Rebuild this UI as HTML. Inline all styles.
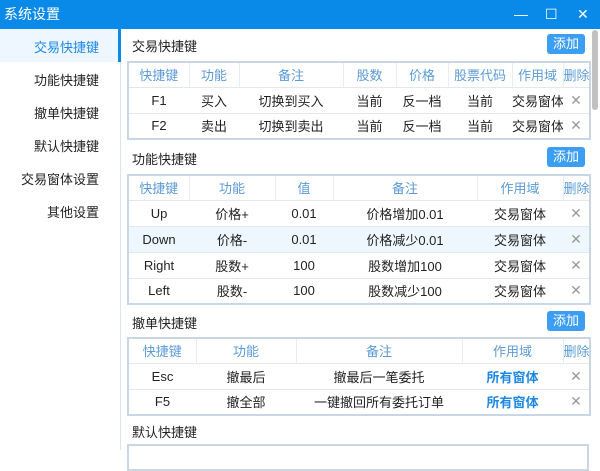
<!DOCTYPE html>
<html><head><meta charset="utf-8"><style>
*{margin:0;padding:0;box-sizing:border-box}
body{width:600px;height:450px;overflow:hidden;background:#fff;font-family:"Liberation Sans","Noto Sans CJK SC",sans-serif;font-size:13px;color:#222;position:relative}
.title{position:absolute;left:0;top:0;width:600px;height:29px;background:#0a8ae8;color:#fff;font-size:14px;line-height:29px;padding-left:4px}
.wb{position:absolute;top:0;height:29px;line-height:29px;color:#fff;font-size:14px}
.side{position:absolute;left:0;top:29px;width:121px;height:421px;border-right:1px solid #dde3ea}
.si{position:absolute;left:0;width:99px;font-size:13px;text-align:right}
.act{position:absolute;left:0;top:29px;width:121px;height:33px;background:#eef6ff;border-right:3px solid #0a8ae8}
.h{position:absolute;left:132px;font-size:13px}
.btn{position:absolute;left:547px;width:38px;height:20px;background:#3c9ef2;color:#fff;border-radius:3px;text-align:center;line-height:20px;font-size:13px}
table{position:absolute;left:127px;width:462px;border-collapse:collapse;border:2px solid #c9d6e6;table-layout:fixed}
td{text-align:center;height:26px;border-bottom:1px solid #e3e8ee;white-space:nowrap;overflow:hidden;font-size:13px}
tr.hd td{color:#5b9bd5;border-right:1px solid #e8edf2;height:25px}
tr.hd td:last-child{border-right:none}
.x{color:#999;font-size:14px}
.bl{color:#1e88e5;font-weight:bold}
.hl td{background:#eef6fe}
.sb{position:absolute;left:592px;top:30px;width:6px;height:80px;background:#c1c1c1;border-radius:3px}
</style></head><body>
<div class="title">系统设置</div>
<div class="wb" style="left:514px">—</div>
<div class="wb" style="left:545px">☐</div>
<div class="wb" style="left:577px">✕</div>
<div class="side"></div>
<div class="act"></div>
<div class="si" style="top:37px;color:#1e88e5">交易快捷键</div>
<div class="si" style="top:70px">功能快捷键</div>
<div class="si" style="top:103px">撤单快捷键</div>
<div class="si" style="top:136px">默认快捷键</div>
<div class="si" style="top:169px">交易窗体设置</div>
<div class="si" style="top:202px">其他设置</div>

<div class="h" style="top:36px">交易快捷键</div>
<div class="btn" style="top:34px">添加</div>
<table style="top:61px">
<colgroup><col style="width:61px"><col style="width:50px"><col style="width:104px"><col style="width:53px"><col style="width:52px"><col style="width:64px"><col style="width:51px"><col style="width:27px"></colgroup>
<tr class="hd"><td>快捷键</td><td>功能</td><td>备注</td><td>股数</td><td>价格</td><td>股票代码</td><td>作用域</td><td>删除</td></tr>
<tr><td>F1</td><td>买入</td><td>切换到买入</td><td>当前</td><td>反一档</td><td>当前</td><td>交易窗体</td><td class="x">✕</td></tr>
<tr><td>F2</td><td>卖出</td><td>切换到卖出</td><td>当前</td><td>反一档</td><td>当前</td><td>交易窗体</td><td class="x">✕</td></tr>
</table>

<div class="h" style="top:149px">功能快捷键</div>
<div class="btn" style="top:147px">添加</div>
<table style="top:174px">
<colgroup><col style="width:61px"><col style="width:86px"><col style="width:58px"><col style="width:144px"><col style="width:86px"><col style="width:27px"></colgroup>
<tr class="hd"><td>快捷键</td><td>功能</td><td>值</td><td>备注</td><td>作用域</td><td>删除</td></tr>
<tr><td>Up</td><td>价格+</td><td>0.01</td><td>价格增加0.01</td><td>交易窗体</td><td class="x">✕</td></tr>
<tr class="hl"><td>Down</td><td>价格-</td><td>0.01</td><td>价格减少0.01</td><td>交易窗体</td><td class="x">✕</td></tr>
<tr><td>Right</td><td>股数+</td><td>100</td><td>股数增加100</td><td>交易窗体</td><td class="x">✕</td></tr>
<tr><td>Left</td><td>股数-</td><td>100</td><td>股数减少100</td><td>交易窗体</td><td class="x">✕</td></tr>
</table>

<div class="h" style="top:313px">撤单快捷键</div>
<div class="btn" style="top:311px">添加</div>
<table style="top:337px">
<colgroup><col style="width:68px"><col style="width:100px"><col style="width:166px"><col style="width:101px"><col style="width:27px"></colgroup>
<tr class="hd"><td>快捷键</td><td>功能</td><td>备注</td><td>作用域</td><td>删除</td></tr>
<tr><td>Esc</td><td>撤最后</td><td>撤最后一笔委托</td><td class="bl">所有窗体</td><td class="x">✕</td></tr>
<tr><td>F5</td><td>撤全部</td><td>一键撤回所有委托订单</td><td class="bl">所有窗体</td><td class="x">✕</td></tr>
</table>

<div class="h" style="top:422px">默认快捷键</div>
<table style="top:444px;height:20px"><tr class="hd"><td></td></tr></table>
<div class="sb"></div>
</body></html>
